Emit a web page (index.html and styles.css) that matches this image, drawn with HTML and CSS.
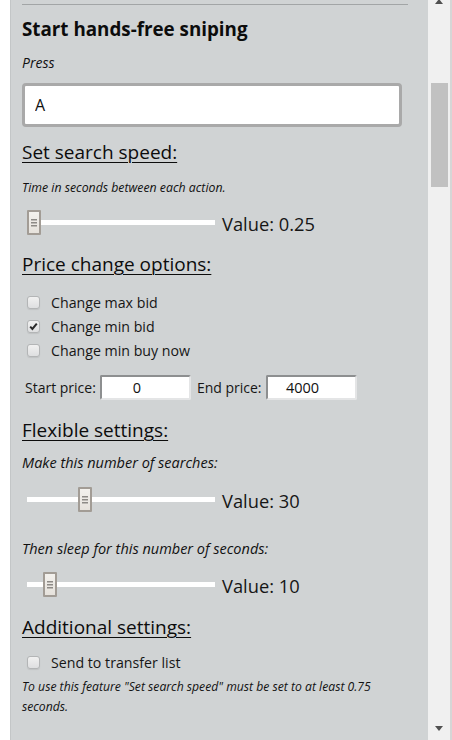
FILE: index.html
```html
<!DOCTYPE html>
<html>
<head>
<meta charset="utf-8">
<link rel="stylesheet" href="styles.css">
</head>
<body>
<div class="gap-left"></div>
<div class="panel">
  <div class="rule"></div>
  <h3 class="title">Start hands-free sniping</h3>
  <div class="press">Press</div>
  <input class="key-input" type="text" value="A">

  <div class="heading h-speed">Set search speed:</div>
  <div class="hint">Time in seconds between each action.</div>
  <div class="slider-row r1">
    <input class="slider" type="range" min="0.25" max="5" step="0.05" value="0.25">
    <span class="value">Value: 0.25</span>
  </div>

  <div class="heading h-price">Price change options:</div>
  <div class="checks">
    <label class="check-row"><span class="box"></span><span>Change max bid</span></label>
    <label class="check-row"><span class="box"><svg width="13" height="13" viewBox="0 0 13 13"><path d="M3.2 6.6 L5.4 9 L9.8 3.6" fill="none" stroke="#2b2b2b" stroke-width="2"/></svg></span><span>Change min bid</span></label>
    <label class="check-row"><span class="box"></span><span>Change min buy now</span></label>
  </div>
  <div class="price-row">
    <span>Start price:</span>
    <input class="num" type="text" value="0">
    <span>End price:</span>
    <input class="num" type="text" value="4000">
  </div>

  <div class="heading h-flex">Flexible settings:</div>
  <div class="sub s1">Make this number of searches:</div>
  <div class="slider-row r2">
    <input class="slider" type="range" min="1" max="100" value="30">
    <span class="value">Value: 30</span>
  </div>
  <div class="sub s2">Then sleep for this number of seconds:</div>
  <div class="slider-row r3">
    <input class="slider" type="range" min="1" max="100" value="10">
    <span class="value">Value: 10</span>
  </div>

  <div class="heading h-add">Additional settings:</div>
  <label class="check-row single"><span class="box"></span><span>Send to transfer list</span></label>
  <div class="note">To use this feature "Set search speed" must be set to at least 0.75 seconds.</div>
</div>
<div class="scrollbar">
  <div class="arrow up"></div>
  <div class="thumb"></div>
  <div class="track-fill"></div>
  <div class="arrow down"></div>
</div>
<div class="edge"></div>
</body>
</html>
```

FILE: styles.css
```css
html, body {
  margin: 0;
  padding: 0;
  height: 740px;
  overflow: hidden;
  background: #ffffff;
}
body {
  display: flex;
  font-family: "Open Sans", "Noto Sans", sans-serif;
  color: #111;
}
.gap-left {
  width: 10px;
  flex: none;
}
.panel {
  width: 396px;
  flex: none;
  background: #d0d3d4;
  border-left: 1px solid #c3c6c7;
  padding: 0 10px 0 11px;
  display: flex;
  flex-direction: column;
  align-items: flex-start;
}
.rule {
  margin-top: 4px;
  height: 1px;
  width: 386px;
  background: #a2a5a6;
}
.title {
  margin: 12px 0 0;
  font-size: 18.8px;
  font-weight: 700;
  line-height: 24px;
  color: #0c0c0c;
}
.press {
  margin-top: 13px;
  font-size: 14px;
  line-height: 18px;
  font-style: italic;
}
.key-input {
  margin-top: 11px;
  box-sizing: border-box;
  width: 380px;
  height: 44px;
  border: 3px solid #a9a9a9;
  border-radius: 4px;
  background: #fff;
  padding: 0 10px;
  font-family: inherit;
  font-size: 16px;
  color: #111;
  outline: none;
}
.heading {
  font-size: 19px;
  line-height: 24px;
  text-decoration: underline;
  text-underline-offset: 3px;
  text-decoration-thickness: 1px;
  color: #0c0c0c;
}
.h-speed { margin-top: 13px; }
.h-price { margin-top: 17px; }
.h-flex { margin-top: 18px; }
.h-add { margin-top: 18px; }
.hint {
  margin-top: 16px;
  font-size: 12.3px;
  line-height: 16px;
  font-style: italic;
}
.slider-row {
  display: flex;
  align-items: center;
  height: 25px;
  gap: 7px;
}
.r1 { margin-top: 14px; }
.r2 { margin-top: 14px; }
.r3 { margin-top: 13px; }
.slider {
  -webkit-appearance: none;
  appearance: none;
  margin: 0 0 0 5px;
  width: 188px;
  height: 25px;
  background: transparent;
  outline: none;
}
.slider::-webkit-slider-runnable-track {
  height: 5px;
  background: #ffffff;
  border: none;
}
.slider::-webkit-slider-thumb {
  -webkit-appearance: none;
  appearance: none;
  box-sizing: border-box;
  width: 14px;
  height: 25px;
  margin-top: -10px;
  border: 2px solid #a29c95;
  border-radius: 1px;
  background-color: #ece8e2;
  background-image:
    linear-gradient(#8d8a86, #8d8a86),
    linear-gradient(#8d8a86, #8d8a86),
    linear-gradient(#8d8a86, #8d8a86),
    linear-gradient(#f3f1ed, #e6e2dc);
  background-size: 6px 1.5px, 6px 1.5px, 6px 1.5px, 100% 100%;
  background-position: center calc(50% - 3px), center center, center calc(50% + 3px), 0 0;
  background-repeat: no-repeat;
}
.value {
  font-size: 18.3px;
  line-height: 25px;
  padding-top: 2px;
  color: #161616;
}
.checks {
  margin-top: 14px;
  display: flex;
  flex-direction: column;
}
.check-row {
  display: flex;
  align-items: center;
  height: 24px;
  font-size: 14.2px;
  color: #161616;
}
.single {
  margin-top: 11px;
}
.box {
  box-sizing: border-box;
  width: 13px;
  height: 13px;
  margin: 0 11px 0 5px;
  border: 1px solid #b3b5b6;
  border-radius: 3px;
  background: linear-gradient(#f1f1f1, #dedfe0);
  box-shadow: 0 1px 1px rgba(0,0,0,0.08);
  display: flex;
}
.box svg {
  margin: -1px;
}
.price-row {
  margin-top: 13px;
  display: flex;
  align-items: center;
  height: 25px;
  font-size: 14px;
  color: #161616;
  padding-left: 3px;
}
.num {
  box-sizing: border-box;
  width: 91px;
  height: 25px;
  margin: 0 7px 0 4px;
  border-style: solid;
  border-width: 2px;
  border-color: #8d8f90 #e4e5e6 #e4e5e6 #8d8f90;
  border-radius: 2px;
  background: #fff;
  font-family: inherit;
  font-size: 14.5px;
  color: #111;
  text-align: center;
  padding: 0 17px 0 0;
  outline: none;
}
.num + span {
  margin-left: -1px;
}
.sub {
  font-size: 14.5px;
  line-height: 20px;
  font-style: italic;
}
.s1 { margin-top: 11px; }
.s2 { margin-top: 27px; }
.note {
  margin-top: 3px;
  font-size: 12.2px;
  line-height: 20px;
  font-style: italic;
  width: 372px;
}
.scrollbar {
  width: 22px;
  flex: none;
  background: #f0f0f0;
  display: flex;
  flex-direction: column;
  align-items: center;
}
.arrow {
  width: 0;
  height: 0;
  border-left: 4.5px solid transparent;
  border-right: 4.5px solid transparent;
}
.arrow.up {
  border-bottom: 5px solid #505050;
  margin-top: -1px;
}
.thumb {
  margin-top: 79px;
  width: 17px;
  height: 104px;
  background: #c1c1c1;
}
.track-fill {
  flex: 1;
}
.arrow.down {
  border-top: 5px solid #505050;
  margin-bottom: 9px;
}
.edge {
  flex: 1;
  border-left: 2px solid #d6d6d6;
  background: #fff;
}
```
